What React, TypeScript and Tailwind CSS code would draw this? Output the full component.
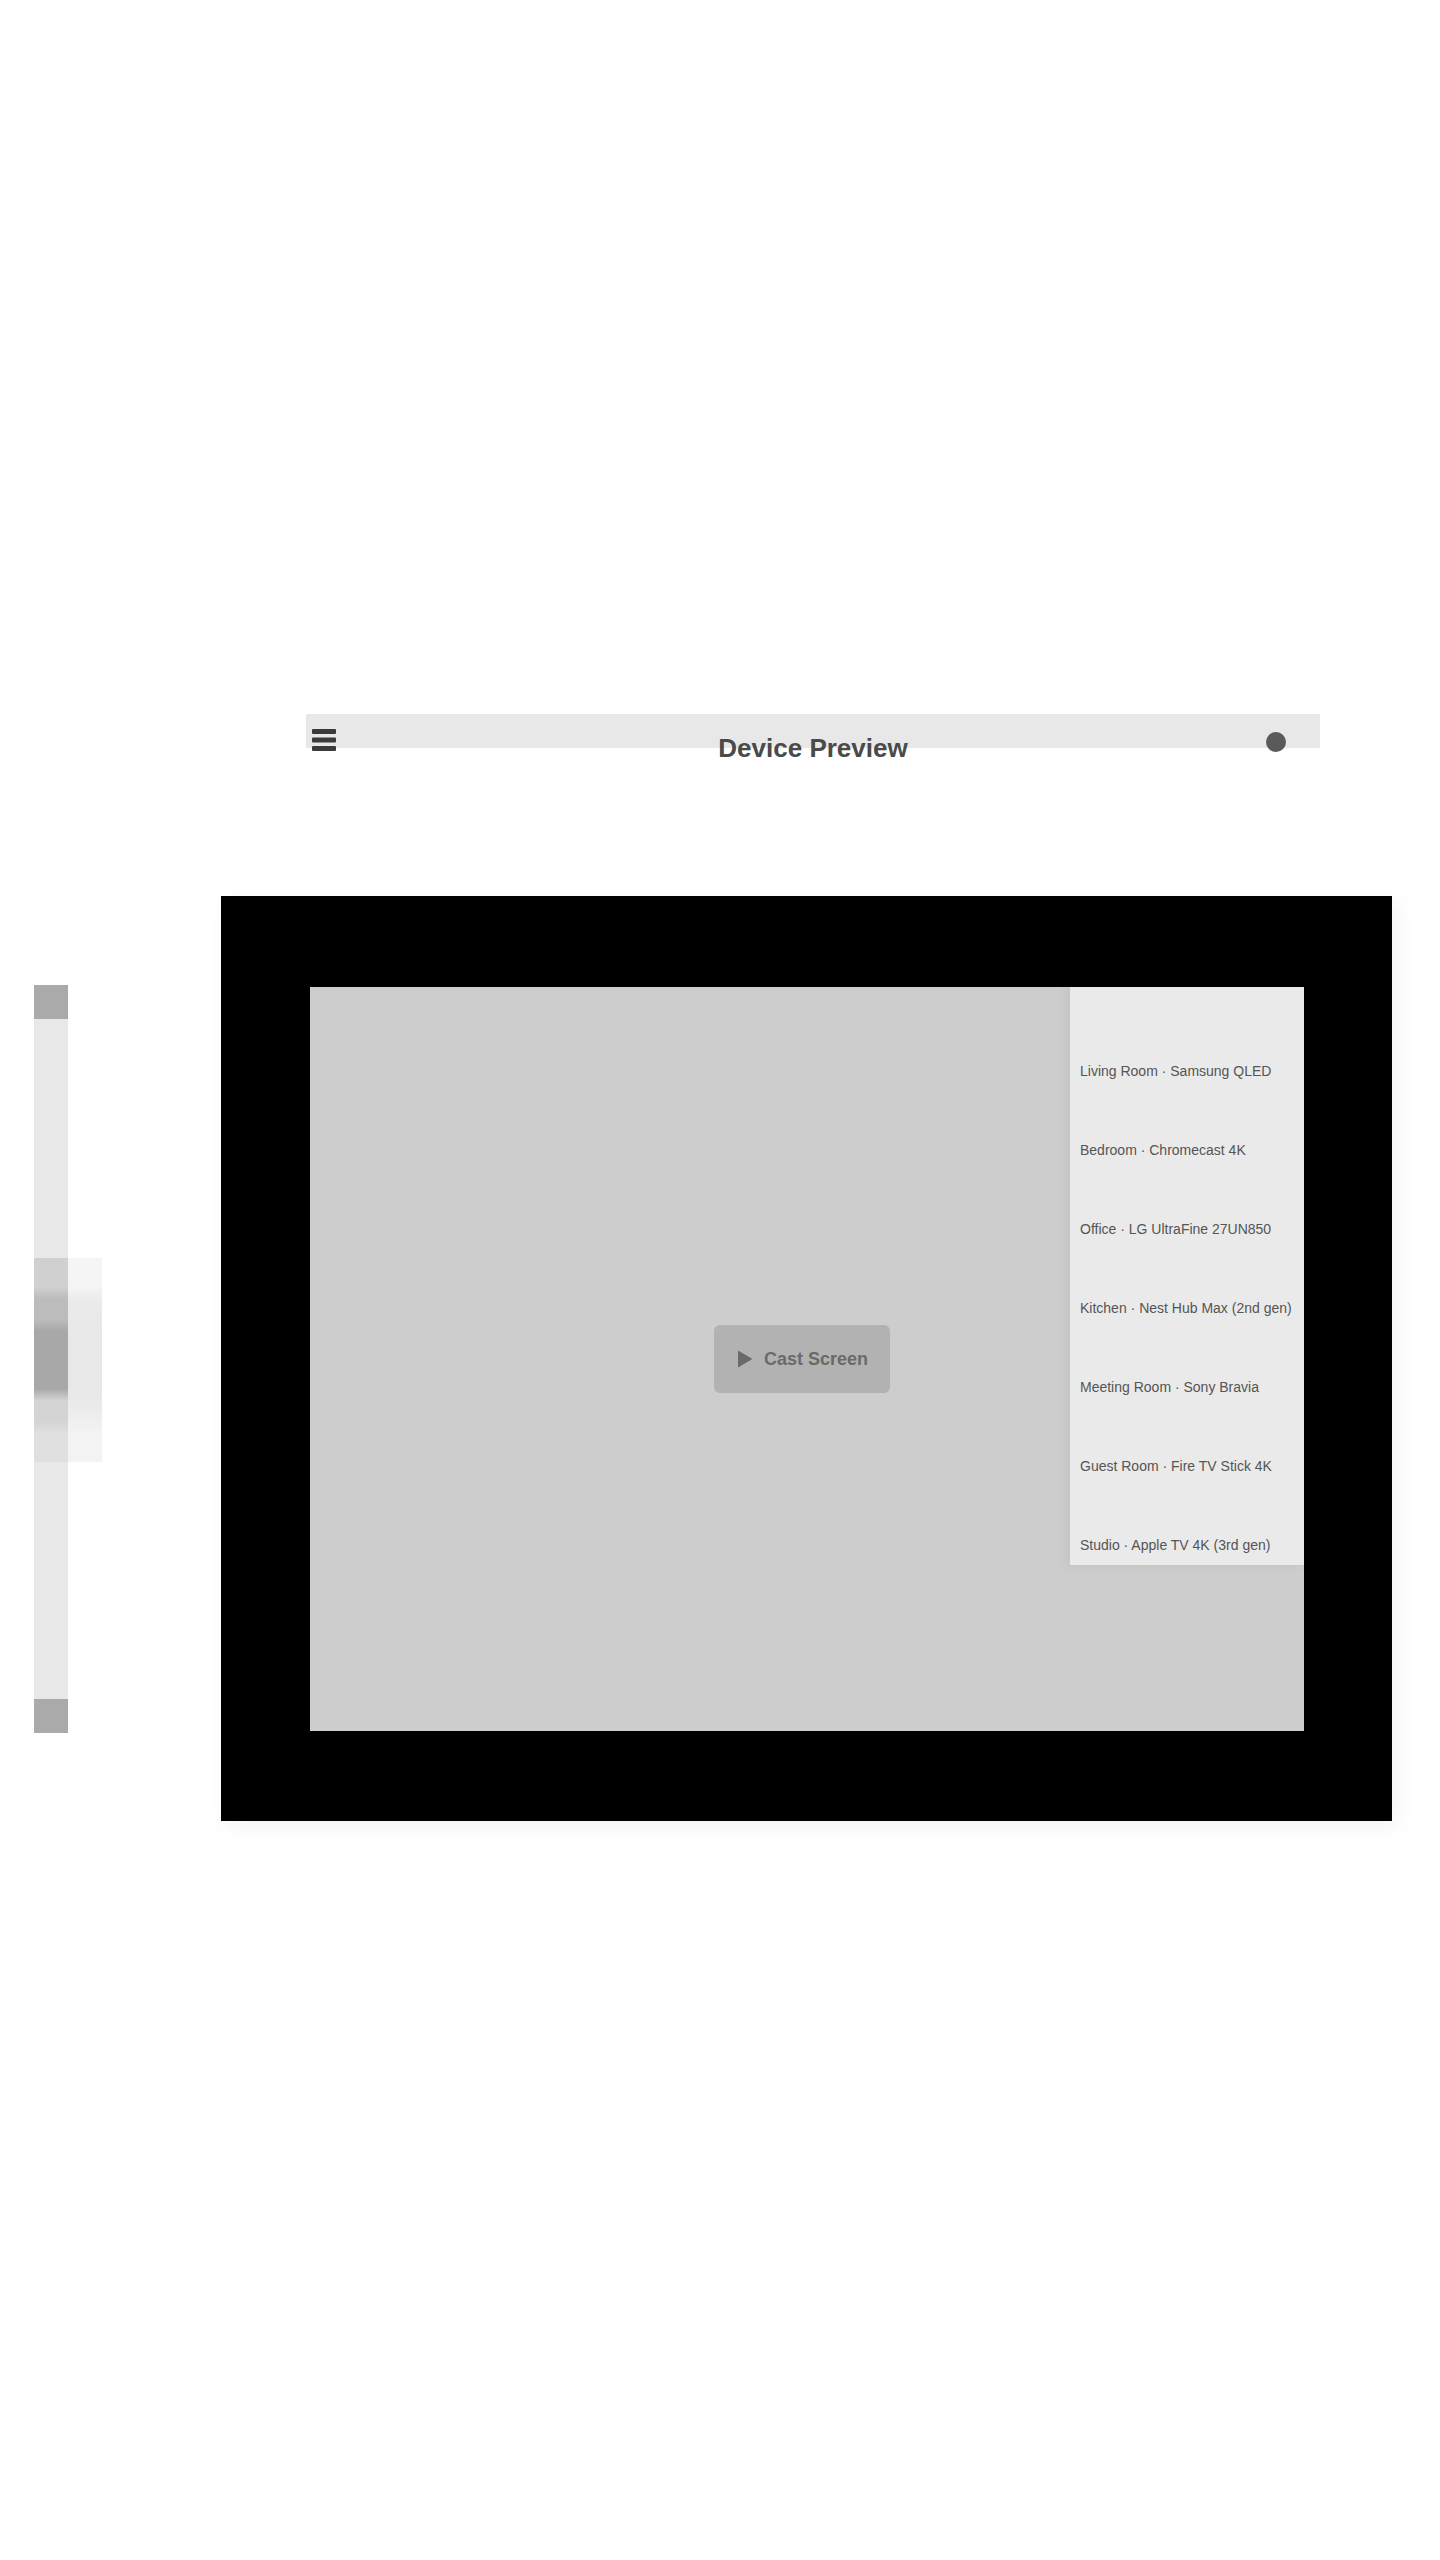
import React from 'react';

const devices = [
  'Living Room · Samsung QLED',
  'Bedroom · Chromecast 4K',
  'Office · LG UltraFine 27UN850',
  'Kitchen · Nest Hub Max (2nd gen)',
  'Meeting Room · Sony Bravia',
  'Guest Room · Fire TV Stick 4K',
  'Studio · Apple TV 4K (3rd gen)',
];

function MenuIcon() {
  return (
    <svg width="24" height="22" viewBox="0 0 24 22" aria-hidden="true">
      <rect x="0" y="0" width="24" height="5" rx="1" fill="#3a3a3a" />
      <rect x="0" y="8.5" width="24" height="5" rx="1" fill="#3a3a3a" />
      <rect x="0" y="17" width="24" height="5" rx="1" fill="#3a3a3a" />
    </svg>
  );
}

function PlayIcon() {
  return (
    <svg width="18" height="20" viewBox="0 0 18 20" aria-hidden="true">
      <path d="M2 1.5 L16.5 10 L2 18.5 Z" fill="#6a6a6a" />
    </svg>
  );
}

export default function App() {
  return (
    <div className="min-h-[2560px] w-[1440px] bg-white pt-[714px] font-['Liberation_Sans',Arial,sans-serif]">
      {/* Header */}
      <header className="ml-[306px] grid h-[68px] w-[1014px] grid-cols-[1fr_auto_1fr] bg-[linear-gradient(to_bottom,#e8e8e8_0,#e8e8e8_34px,transparent_34px)]">
        <div className="pl-[6px] pt-[15px]">
          <MenuIcon />
        </div>
        <h1 className="self-center text-[26px] font-bold leading-[32px] text-[#4a4a4a]">Device Preview</h1>
        <div className="flex justify-end pr-[34px] pt-[18px]">
          <span className="h-[20px] w-[20px] rounded-full bg-[#5a5a5a]" />
        </div>
      </header>

      <div className="mt-[114px] flex items-center">
        {/* Zoom slider */}
        <div className="ml-[34px] flex h-[748px] w-[34px] flex-col">
          <div className="h-[34px] bg-[#aaaaaa]" />
          <div className="relative flex-1 bg-[#e8e8e8]">
            <div className="absolute left-0 top-[239px] flex h-[204px] w-[68px]">
              <div className="w-[34px] bg-[linear-gradient(to_bottom,#d0d0d0_0%,#d0d0d0_14%,#bcbcbc_20%,#bcbcbc_30%,#a8a8a8_36%,#a8a8a8_64%,#d4d4d4_70%,#d4d4d4_80%,#e0e0e0_86%,#e0e0e0_100%)]" />
              <div className="w-[34px] bg-[linear-gradient(to_bottom,#f5f5f5_0%,#f5f5f5_14%,#ebebeb_20%,#e8e8e8_36%,#e8e8e8_64%,#eaeaea_72%,#f3f3f3_86%,#f3f3f3_100%)]" />
            </div>
          </div>
          <div className="h-[34px] bg-[#aaaaaa]" />
        </div>

        {/* Device frame */}
        <div className="ml-[153px] h-[925px] w-[1171px] bg-black pb-[90px] pl-[89px] pr-[88px] pt-[91px] shadow-[6px_6px_20px_rgba(0,0,0,0.05)]">
          <div className="relative flex h-full w-full items-center justify-center bg-[#cdcdcd]">
            <button
              type="button"
              className="mr-[10px] flex h-[68px] w-[176px] items-center justify-center gap-[10px] rounded-[6px] bg-[#b2b2b2] text-[18px] font-bold text-[#6a6a6a]"
            >
              <PlayIcon />
              Cast Screen
            </button>

            {/* Device list */}
            <div className="absolute right-0 top-0 h-[578px] w-[234px] bg-[#eaeaea] pt-[25px] shadow-[-4px_0_12px_rgba(0,0,0,0.05)]">
              {devices.map((name) => (
                <div key={name} className="flex h-[79px] flex-col justify-end pb-[12px] pl-[10px] pr-[8px]">
                  <p className="whitespace-nowrap text-[14px] leading-[16px] text-[#555555]">{name}</p>
                </div>
              ))}
            </div>
          </div>
        </div>
      </div>
    </div>
  );
}
